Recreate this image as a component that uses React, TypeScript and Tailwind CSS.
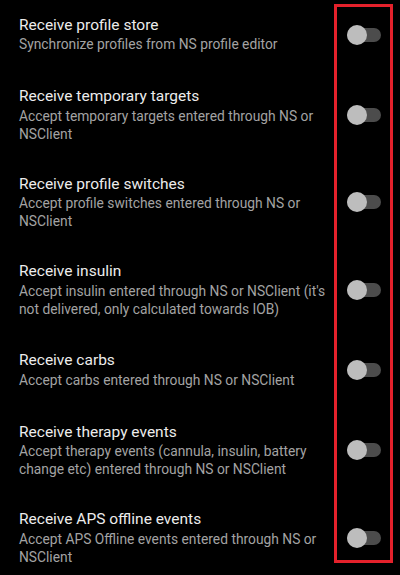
const prefs = [
  { title: 'Receive profile store', summary: 'Synchronize profiles from NS profile editor' },
  { title: 'Receive temporary targets', summary: 'Accept temporary targets entered through NS or NSClient' },
  { title: 'Receive profile switches', summary: 'Accept profile switches entered through NS or NSClient' },
  {
    title: 'Receive insulin',
    summary: "Accept insulin entered through NS or NSClient (it's not delivered, only calculated towards IOB)",
  },
  { title: 'Receive carbs', summary: 'Accept carbs entered through NS or NSClient' },
  {
    title: 'Receive therapy events',
    summary: 'Accept therapy events (cannula, insulin, battery change etc) entered through NS or NSClient',
  },
  { title: 'Receive APS offline events', summary: 'Accept APS Offline events entered through NS or NSClient' },
]

function Switch() {
  return (
    <div className="relative flex h-[20px] w-[34px] shrink-0 items-center">
      <div className="h-[14px] w-full rounded-full bg-[#4c4c4c]" />
      <div className="absolute left-0 top-0 h-[20px] w-[20px] rounded-full bg-[#bdbdbd]" />
    </div>
  )
}

export default function App() {
  return (
    <div
      className="relative h-[575px] w-[400px] overflow-hidden bg-black"
      style={{ fontFamily: 'Roboto, "Noto Sans", sans-serif' }}
    >
      <div className="-mt-[2px] flex flex-col">
        {prefs.map((p) => (
          <div key={p.title} className="flex min-h-[73px] items-center gap-4 px-[19px] py-[16px]">
            <div className="flex-1">
              <div className="text-[15.5px] leading-[19.5px] text-[#ececec]">{p.title}</div>
              <div className="text-[13.8px] leading-[18px] text-[#a3a3a3]">{p.summary}</div>
            </div>
            <Switch />
          </div>
        ))}
      </div>
      <div className="pointer-events-none absolute left-[334px] top-[4px] h-[559px] w-[59px] border-[3px] border-[#e4212b]" />
    </div>
  )
}
